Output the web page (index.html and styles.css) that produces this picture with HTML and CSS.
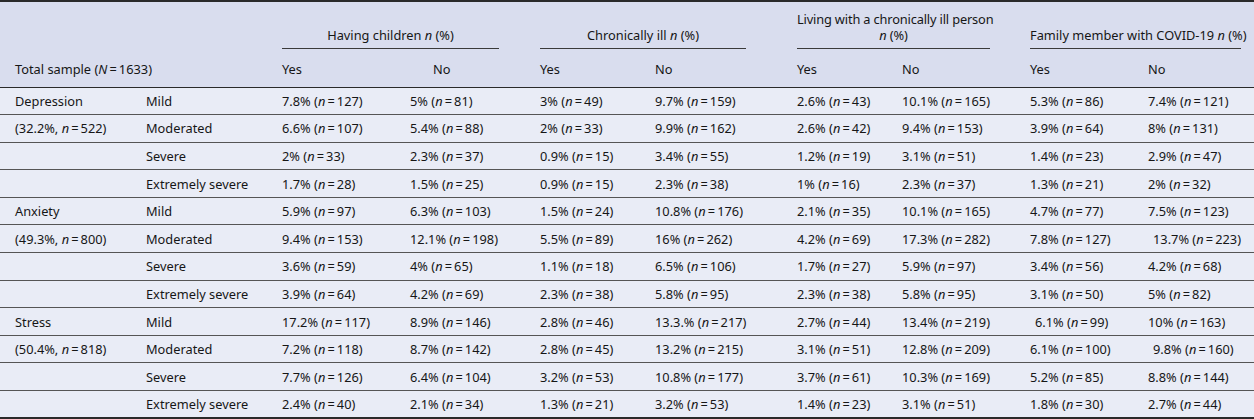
FILE: index.html
```html
<!DOCTYPE html>
<html lang="en">
<head>
<meta charset="utf-8">
<title>Table</title>
<link rel="stylesheet" href="styles.css">
</head>
<body>
<table class="tbl">
  <colgroup>
    <col class="c1"><col class="c2"><col class="c3"><col class="c4"><col class="c5">
    <col class="c6"><col class="c7"><col class="c8"><col class="c9"><col class="c10">
  </colgroup>
  <thead>
    <tr class="hr1">
      <th class="first"></th>
      <th></th>
      <th colspan="2" class="group"><div class="gl g1">Having children <i>n</i> (%)</div></th>
      <th colspan="2" class="group"><div class="gl g2">Chronically ill <i>n</i> (%)</div></th>
      <th colspan="2" class="group"><div class="gl g3">Living with a chronically ill person<br><i>n</i> (%)</div></th>
      <th colspan="2" class="group"><div class="gl g4">Family member with COVID-19 <i>n</i> (%)</div></th>
    </tr>
    <tr class="hr2">
      <th colspan="2" class="first">Total sample (<i>N</i>&#8201;=&#8201;1633)</th>
      <th>Yes</th><th class="no-c">No</th>
      <th>Yes</th><th>No</th>
      <th>Yes</th><th>No</th>
      <th>Yes</th><th>No</th>
    </tr>
  </thead>
  <tbody>
    <tr>
      <td class="first">Depression</td><td>Mild</td>
      <td>7.8% (<i>n</i>&#8201;=&#8201;127)</td><td>5% (<i>n</i>&#8201;=&#8201;81)</td>
      <td>3% (<i>n</i>&#8201;=&#8201;49)</td><td>9.7% (<i>n</i>&#8201;=&#8201;159)</td>
      <td>2.6% (<i>n</i>&#8201;=&#8201;43)</td><td>10.1% (<i>n</i>&#8201;=&#8201;165)</td>
      <td>5.3% (<i>n</i>&#8201;=&#8201;86)</td><td>7.4% (<i>n</i>&#8201;=&#8201;121)</td>
    </tr>
    <tr>
      <td class="first">(32.2%, <i>n</i>&#8201;=&#8201;522)</td><td>Moderated</td>
      <td>6.6% (<i>n</i>&#8201;=&#8201;107)</td><td>5.4% (<i>n</i>&#8201;=&#8201;88)</td>
      <td>2% (<i>n</i>&#8201;=&#8201;33)</td><td>9.9% (<i>n</i>&#8201;=&#8201;162)</td>
      <td>2.6% (<i>n</i>&#8201;=&#8201;42)</td><td>9.4% (<i>n</i>&#8201;=&#8201;153)</td>
      <td>3.9% (<i>n</i>&#8201;=&#8201;64)</td><td>8% (<i>n</i>&#8201;=&#8201;131)</td>
    </tr>
    <tr>
      <td class="first"></td><td>Severe</td>
      <td>2% (<i>n</i>&#8201;=&#8201;33)</td><td>2.3% (<i>n</i>&#8201;=&#8201;37)</td>
      <td>0.9% (<i>n</i>&#8201;=&#8201;15)</td><td>3.4% (<i>n</i>&#8201;=&#8201;55)</td>
      <td>1.2% (<i>n</i>&#8201;=&#8201;19)</td><td>3.1% (<i>n</i>&#8201;=&#8201;51)</td>
      <td>1.4% (<i>n</i>&#8201;=&#8201;23)</td><td>2.9% (<i>n</i>&#8201;=&#8201;47)</td>
    </tr>
    <tr>
      <td class="first"></td><td>Extremely severe</td>
      <td>1.7% (<i>n</i>&#8201;=&#8201;28)</td><td>1.5% (<i>n</i>&#8201;=&#8201;25)</td>
      <td>0.9% (<i>n</i>&#8201;=&#8201;15)</td><td>2.3% (<i>n</i>&#8201;=&#8201;38)</td>
      <td>1% (<i>n</i>&#8201;=&#8201;16)</td><td>2.3% (<i>n</i>&#8201;=&#8201;37)</td>
      <td>1.3% (<i>n</i>&#8201;=&#8201;21)</td><td>2% (<i>n</i>&#8201;=&#8201;32)</td>
    </tr>
    <tr>
      <td class="first">Anxiety</td><td>Mild</td>
      <td>5.9% (<i>n</i>&#8201;=&#8201;97)</td><td>6.3% (<i>n</i>&#8201;=&#8201;103)</td>
      <td>1.5% (<i>n</i>&#8201;=&#8201;24)</td><td>10.8% (<i>n</i>&#8201;=&#8201;176)</td>
      <td>2.1% (<i>n</i>&#8201;=&#8201;35)</td><td>10.1% (<i>n</i>&#8201;=&#8201;165)</td>
      <td>4.7% (<i>n</i>&#8201;=&#8201;77)</td><td>7.5% (<i>n</i>&#8201;=&#8201;123)</td>
    </tr>
    <tr>
      <td class="first">(49.3%, <i>n</i>&#8201;=&#8201;800)</td><td>Moderated</td>
      <td>9.4% (<i>n</i>&#8201;=&#8201;153)</td><td>12.1% (<i>n</i>&#8201;=&#8201;198)</td>
      <td>5.5% (<i>n</i>&#8201;=&#8201;89)</td><td>16% (<i>n</i>&#8201;=&#8201;262)</td>
      <td>4.2% (<i>n</i>&#8201;=&#8201;69)</td><td>17.3% (<i>n</i>&#8201;=&#8201;282)</td>
      <td>7.8% (<i>n</i>&#8201;=&#8201;127)</td><td class="ind">13.7% (<i>n</i>&#8201;=&#8201;223)</td>
    </tr>
    <tr>
      <td class="first"></td><td>Severe</td>
      <td>3.6% (<i>n</i>&#8201;=&#8201;59)</td><td>4% (<i>n</i>&#8201;=&#8201;65)</td>
      <td>1.1% (<i>n</i>&#8201;=&#8201;18)</td><td>6.5% (<i>n</i>&#8201;=&#8201;106)</td>
      <td>1.7% (<i>n</i>&#8201;=&#8201;27)</td><td>5.9% (<i>n</i>&#8201;=&#8201;97)</td>
      <td>3.4% (<i>n</i>&#8201;=&#8201;56)</td><td>4.2% (<i>n</i>&#8201;=&#8201;68)</td>
    </tr>
    <tr>
      <td class="first"></td><td>Extremely severe</td>
      <td>3.9% (<i>n</i>&#8201;=&#8201;64)</td><td>4.2% (<i>n</i>&#8201;=&#8201;69)</td>
      <td>2.3% (<i>n</i>&#8201;=&#8201;38)</td><td>5.8% (<i>n</i>&#8201;=&#8201;95)</td>
      <td>2.3% (<i>n</i>&#8201;=&#8201;38)</td><td>5.8% (<i>n</i>&#8201;=&#8201;95)</td>
      <td>3.1% (<i>n</i>&#8201;=&#8201;50)</td><td>5% (<i>n</i>&#8201;=&#8201;82)</td>
    </tr>
    <tr>
      <td class="first">Stress</td><td>Mild</td>
      <td>17.2% (<i>n</i>&#8201;=&#8201;117)</td><td>8.9% (<i>n</i>&#8201;=&#8201;146)</td>
      <td>2.8% (<i>n</i>&#8201;=&#8201;46)</td><td>13.3.% (<i>n</i>&#8201;=&#8201;217)</td>
      <td>2.7% (<i>n</i>&#8201;=&#8201;44)</td><td>13.4% (<i>n</i>&#8201;=&#8201;219)</td>
      <td class="ind">6.1% (<i>n</i>&#8201;=&#8201;99)</td><td>10% (<i>n</i>&#8201;=&#8201;163)</td>
    </tr>
    <tr>
      <td class="first">(50.4%, <i>n</i>&#8201;=&#8201;818)</td><td>Moderated</td>
      <td>7.2% (<i>n</i>&#8201;=&#8201;118)</td><td>8.7% (<i>n</i>&#8201;=&#8201;142)</td>
      <td>2.8% (<i>n</i>&#8201;=&#8201;45)</td><td>13.2% (<i>n</i>&#8201;=&#8201;215)</td>
      <td>3.1% (<i>n</i>&#8201;=&#8201;51)</td><td>12.8% (<i>n</i>&#8201;=&#8201;209)</td>
      <td>6.1% (<i>n</i>&#8201;=&#8201;100)</td><td class="ind">9.8% (<i>n</i>&#8201;=&#8201;160)</td>
    </tr>
    <tr>
      <td class="first"></td><td>Severe</td>
      <td>7.7% (<i>n</i>&#8201;=&#8201;126)</td><td>6.4% (<i>n</i>&#8201;=&#8201;104)</td>
      <td>3.2% (<i>n</i>&#8201;=&#8201;53)</td><td>10.8% (<i>n</i>&#8201;=&#8201;177)</td>
      <td>3.7% (<i>n</i>&#8201;=&#8201;61)</td><td>10.3% (<i>n</i>&#8201;=&#8201;169)</td>
      <td>5.2% (<i>n</i>&#8201;=&#8201;85)</td><td>8.8% (<i>n</i>&#8201;=&#8201;144)</td>
    </tr>
    <tr>
      <td class="first"></td><td>Extremely severe</td>
      <td>2.4% (<i>n</i>&#8201;=&#8201;40)</td><td>2.1% (<i>n</i>&#8201;=&#8201;34)</td>
      <td>1.3% (<i>n</i>&#8201;=&#8201;21)</td><td>3.2% (<i>n</i>&#8201;=&#8201;53)</td>
      <td>1.4% (<i>n</i>&#8201;=&#8201;23)</td><td>3.1% (<i>n</i>&#8201;=&#8201;51)</td>
      <td>1.8% (<i>n</i>&#8201;=&#8201;30)</td><td>2.7% (<i>n</i>&#8201;=&#8201;44)</td>
    </tr>
  </tbody>
</table>
</body>
</html>
```
FILE: styles.css
```css
html, body {
  margin: 0;
  padding: 0;
  background: #ffffff;
}
body {
  font-family: "Noto Sans", "Open Sans", sans-serif;
  font-size: 12.8px;
  color: #161616;
}
.tbl {
  width: 1254px;
  table-layout: fixed;
  border-collapse: collapse;
  border-top: 2px solid #2a2a2a;
  border-bottom: 2px solid #2a2a2a;
}
.c1 { width: 146px; }
.c2 { width: 136px; }
.c3 { width: 128px; }
.c4 { width: 130px; }
.c5 { width: 115px; }
.c6 { width: 142px; }
.c7 { width: 105px; }
.c8 { width: 128px; }
.c9 { width: 118px; }
.c10 { width: 106px; }

th, td {
  padding: 0;
  text-align: left;
  font-weight: normal;
  white-space: nowrap;
  box-sizing: border-box;
}
th.first, td.first {
  padding-left: 15px;
}
thead {
  background: #d9ddee;
}
thead tr.hr1 th {
  height: 54px;
  vertical-align: bottom;
  padding-bottom: 6px;
}
thead tr.hr2 th {
  height: 32px;
  vertical-align: middle;
  border-bottom: 1px solid #2a2a2a;
  padding-bottom: 3px;
}
.gl {
  text-align: center;
  line-height: 16px;
  padding-bottom: 5px;
  border-bottom: 1px solid #3a3a3a;
  white-space: nowrap;
}
.g1 { width: 217px; }
.g2 { width: 206px; }
.g3 { width: 193px; letter-spacing: -0.15px; }
.g4 { width: 211px; }
th.no-c {
  padding-left: 23px;
}
tbody {
  background: #e9ecf6;
}
tbody td {
  height: 27.6px;
  border-bottom: 1px solid #555555;
  vertical-align: middle;
}
tbody tr:last-child td {
  border-bottom: none;
}
td.ind {
  padding-left: 5px;
}
i {
  font-style: italic;
}
```
